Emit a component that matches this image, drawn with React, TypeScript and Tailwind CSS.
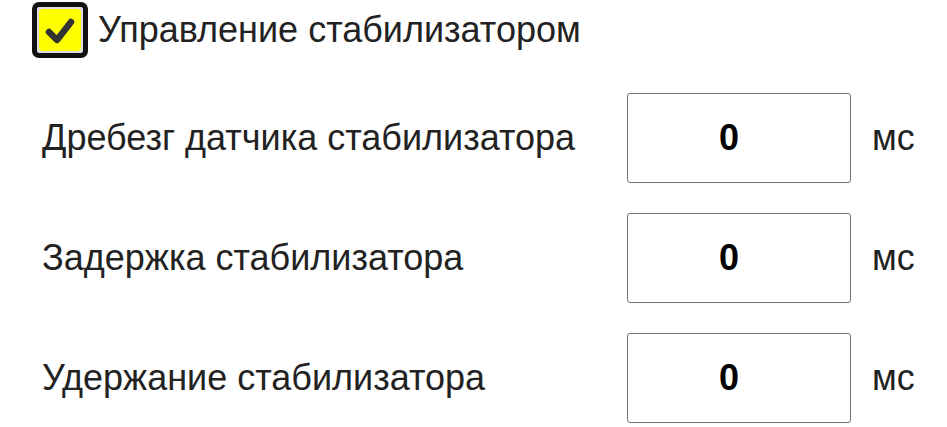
import React from "react";

const rows = [
  "Дребезг датчика стабилизатора",
  "Задержка стабилизатора",
  "Удержание стабилизатора",
];

export default function App() {
  return (
    <div
      className="w-[947px] h-[427px] bg-white text-[#222222] overflow-hidden"
      style={{ fontFamily: '"Liberation Sans", Arial, sans-serif' }}
    >
      <div className="flex items-center pl-[32px] pt-[2px] h-[58px]">
        <div className="w-[56px] h-[56px] rounded-[7px] border-[5px] border-[#111111] bg-[#dddddd] p-[2px]">
          <div className="w-full h-full rounded-[4px] bg-[#ffff00] flex items-center justify-center">
            <svg width="34" height="34" viewBox="0 0 34 34">
              <path
                d="M6 19 L14 27 L28 9"
                fill="none"
                stroke="#333333"
                strokeWidth="6.5"
                strokeLinecap="round"
                strokeLinejoin="round"
              />
            </svg>
          </div>
        </div>
        <span className="ml-[10px] text-[36px] leading-none">Управление стабилизатором</span>
      </div>
      <div className="flex flex-col gap-[30px] pt-[35px] pl-[42px]">
        {rows.map((r) => (
          <div key={r} className="flex items-center h-[90px]">
            <div className="w-[585px] text-[36px] leading-none">{r}</div>
            <div className="w-[224px] h-[90px] border border-[#707070] rounded-[3px] flex items-center justify-center pr-[20px] text-[36px] font-bold text-black">
              0
            </div>
            <div className="ml-[21px] text-[36px] leading-none">мс</div>
          </div>
        ))}
      </div>
    </div>
  );
}
